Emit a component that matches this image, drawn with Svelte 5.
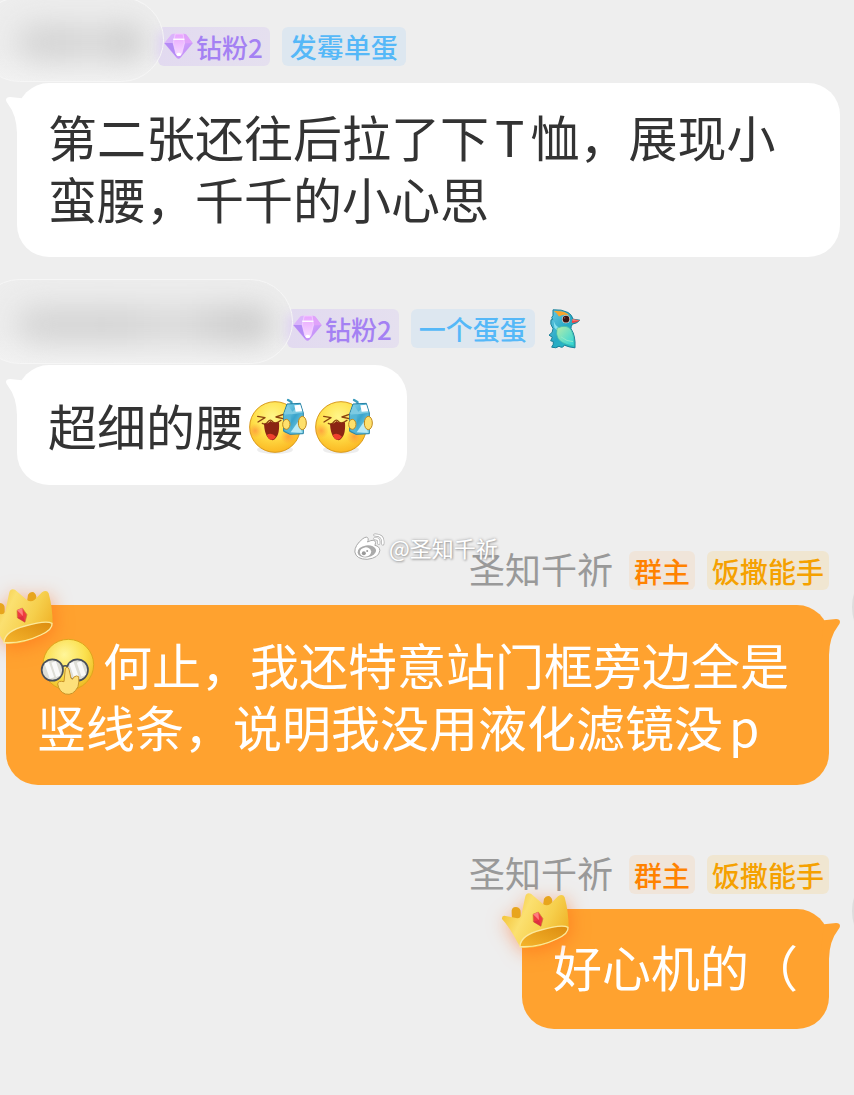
<script lang="ts">
	type Part = { kind: 'text' | 'latin' | 'laugh' | 'glasses'; text?: string };

	interface Message {
		own: boolean;
		name?: string;
		hiddenWidth?: number;
		fanLevel?: string;
		tags: { label: string; tone: string }[];
		bird?: boolean;
		parts: Part[];
	}

	const ownerTags = [
		{ label: '群主', tone: 'owner' },
		{ label: '饭撒能手', tone: 'gold' }
	];

	const messages: Message[] = [
		{
			own: false,
			hiddenWidth: 129,
			fanLevel: '钻粉2',
			tags: [{ label: '发霉单蛋', tone: 'blue' }],
			parts: [
				{ kind: 'text', text: '第二张还往后拉了下' },
				{ kind: 'latin', text: 'T' },
				{ kind: 'text', text: '恤，展现小蛮腰，千千的小心思' }
			]
		},
		{
			own: false,
			hiddenWidth: 258,
			fanLevel: '钻粉2',
			tags: [{ label: '一个蛋蛋', tone: 'blue' }],
			bird: true,
			parts: [{ kind: 'text', text: '超细的腰' }, { kind: 'laugh' }, { kind: 'laugh' }]
		},
		{
			own: true,
			name: '圣知千祈',
			tags: ownerTags,
			parts: [
				{ kind: 'glasses' },
				{ kind: 'text', text: '何止，我还特意站门框旁边全是竖线条，说明我没用液化滤镜没' },
				{ kind: 'latin', text: 'p' }
			]
		},
		{
			own: true,
			name: '圣知千祈',
			tags: ownerTags,
			parts: [{ kind: 'text', text: '好心机的（' }]
		}
	];
</script>

<!-- Gradients shared by the icons -->
<svg class="defs" width="0" height="0" aria-hidden="true">
	<defs>
		<radialGradient id="face" cx="45%" cy="30%" r="75%">
			<stop offset="0" stop-color="#fff68a" />
			<stop offset=".5" stop-color="#ffe04a" />
			<stop offset="1" stop-color="#fbb21c" />
		</radialGradient>
		<radialGradient id="face-pale" cx="42%" cy="30%" r="75%">
			<stop offset="0" stop-color="#fff69a" />
			<stop offset=".55" stop-color="#fbe04e" />
			<stop offset="1" stop-color="#edb820" />
		</radialGradient>
		<radialGradient id="blush">
			<stop offset="0" stop-color="#ff7a3c" stop-opacity=".55" />
			<stop offset="1" stop-color="#ff8a3c" stop-opacity="0" />
		</radialGradient>
		<linearGradient id="carton" x1="0" y1="0" x2="1" y2="1">
			<stop offset="0" stop-color="#8fdcf0" />
			<stop offset=".5" stop-color="#3aa4cb" />
			<stop offset="1" stop-color="#8fdcf0" />
		</linearGradient>
		<linearGradient id="crown" x1="0" y1=".2" x2="1" y2=".6">
			<stop offset="0" stop-color="#f2bd2c" />
			<stop offset=".35" stop-color="#fbe070" />
			<stop offset=".7" stop-color="#f6cf4c" />
			<stop offset="1" stop-color="#f0b42a" />
		</linearGradient>
		<linearGradient id="crown-inside" x1="0" y1="1" x2="1" y2="0">
			<stop offset="0" stop-color="#f5b52c" />
			<stop offset="1" stop-color="#dc8c10" />
		</linearGradient>
		<linearGradient id="gem" x1="0" y1="0" x2="1" y2="1">
			<stop offset="0" stop-color="#f3b4ff" />
			<stop offset=".5" stop-color="#d3a2fa" />
			<stop offset="1" stop-color="#b886f8" />
		</linearGradient>
		<linearGradient id="gem-front" x1="0" y1="0" x2="0" y2="1">
			<stop offset="0" stop-color="#e8a4ff" />
			<stop offset="1" stop-color="#f7dcff" />
		</linearGradient>
		<linearGradient id="bird-body" x1="0" y1="0" x2="1" y2="1">
			<stop offset="0" stop-color="#6cc9e6" />
			<stop offset=".5" stop-color="#28a9c4" />
			<stop offset="1" stop-color="#22c3c0" />
		</linearGradient>
		<linearGradient id="bird-wing" x1="0" y1="0" x2="1" y2="1">
			<stop offset="0" stop-color="#b4ecab" />
			<stop offset="1" stop-color="#2cd4da" />
		</linearGradient>
	</defs>
</svg>

{#snippet gem()}
	<svg class="gem" viewBox="26 60 88 88" aria-hidden="true">
		<path d="M48 68 Q51 65 56 65 H87 Q91 65 94 68 L113 94 L76 138 Q70 144 64 138 L27 94 Z" fill="url(#gem)" />
		<path d="M48 68 L27 94 H54 L60 66 Z" fill="#d9b4fb" />
		<path d="M94 68 L113 94 H88 L82 66 Z" fill="#e0a2fa" />
		<path d="M27 93 H55 L64 136 Z" fill="#b48bf5" />
		<path d="M60 66 H84 L88 94 L80 126 Q70 138 62 126 L54 94 Z" fill="url(#gem-front)" stroke="#f6dcff" stroke-width="2" />
		<path d="M54 82 H88" stroke="#fff" stroke-width="4" />
		<ellipse cx="71" cy="128" rx="7" ry="5" fill="#fff" />
	</svg>
{/snippet}

{#snippet bird()}
	<svg class="bird" viewBox="786 38 102 122" role="img" aria-label="bird">
		<path
			d="M804 43 Q830 41 849 51 Q861 58 864 71 L884 74 Q878 83 862 86 Q857 94 858 100 Q872 119 870 157 Q851 155 838 149 Q833 160 822 152 Q814 160 800 155 Q807 147 805 138 L797 136 L802 125 L792 119 Q805 112 804 99 Q794 86 798 73 L803 72 Q797 66 804 60 Z"
			fill="url(#bird-body)"
			stroke="#197f98"
			stroke-width="3"
			stroke-linejoin="round"
		/>
		<path d="M806 47 Q840 45 853 60 Q834 55 822 63 Q817 51 806 47Z" fill="#f9a52c" />
		<path d="M862 71 L884 74 Q874 84 860 82Z" fill="#ee4545" />
		<path d="M862 71 L884 74 L863 76Z" fill="#ff9084" />
		<path d="M806 76 Q812 98 834 100 Q815 110 808 96Z" fill="#87e2f0" />
		<path d="M816 98 Q848 84 860 106 Q869 124 867 151 Q817 145 815 115Z" fill="url(#bird-wing)" stroke="#3fb9a9" stroke-width="2" />
		<path d="M828 124 Q846 139 864 138" fill="none" stroke="#8deccc" stroke-width="3" />
		<circle cx="843" cy="71" r="12" fill="#f4d9cf" />
		<circle cx="843" cy="71" r="10" fill="#371414" />
		<circle cx="839" cy="67" r="2" fill="#b77" />
	</svg>
{/snippet}

{#snippet laugh()}
	<svg class="emoji" viewBox="21 33 180 180" role="img" aria-label="laughing">
		<ellipse cx="105" cy="194" rx="54" ry="13" fill="#000" opacity=".07" />
		<circle cx="105" cy="126" r="76" fill="url(#face)" stroke="#d99a1c" stroke-width="3" />
		<circle cx="46" cy="137" r="22" fill="url(#blush)" />
		<circle cx="145" cy="154" r="24" fill="url(#blush)" />
		<g fill="none" stroke="#8b4310" stroke-width="4" stroke-linecap="round" stroke-linejoin="round">
			<path d="M53 94 L75 98 L54 111" />
			<path d="M130 88 L108 96 L129 101" />
			<path d="M67 115 Q78 121 84 110 Q91 101 98 110 Q107 119 123 106" />
		</g>
		<path d="M72 117 Q84 117 91 108 Q99 116 117 112 Q120 158 98 166 Q75 163 72 117Z" fill="#8b2413" />
		<path d="M80 150 Q94 140 108 155 Q98 170 86 161Z" fill="#ef402d" />
		<path d="M158 73 L154 51 L144 45" fill="none" stroke="#3d9dbc" stroke-width="7" stroke-linecap="round" />
		<path d="M141 57 L181 55 L190 84 V146 L150 148 L131 139 V86 Z" fill="url(#carton)" stroke="#2581a4" stroke-width="3" stroke-linejoin="round" />
		<path d="M143 59 L157 80 L179 58 L188 83 L155 88 L132 86Z" fill="#7dcbe2" />
		<path d="M163 61 L181 59 L187 79 L167 80Z" fill="#fff" />
		<path d="M135 91 L152 90 V144 L134 137Z" fill="#55b6d5" />
		<path d="M152 142 L174 110 L186 143Z" fill="#b9eaf5" />
		<ellipse cx="139" cy="118" rx="11" ry="15" fill="#fee06c" stroke="#bf891e" stroke-width="3" />
		<ellipse cx="187" cy="114" rx="12" ry="20" fill="#fee06c" stroke="#bf891e" stroke-width="3" />
	</svg>
{/snippet}

{#snippet glasses()}
	<svg class="emoji" viewBox="123 168 180 180" role="img" aria-label="pushing up glasses">
		<circle cx="208" cy="257" r="76" fill="url(#face-pale)" stroke="#dda71c" stroke-width="3" />
		<g stroke="#4a505a" stroke-width="5">
			<circle cx="160" cy="273" r="32" fill="#deded6" />
			<circle cx="235" cy="273" r="32" fill="#deded6" />
			<path d="M190 264 Q198 257 207 263" fill="none" />
		</g>
		<g stroke="#fff" stroke-width="14" opacity=".85">
			<path d="M143 251 L159 297 M164 249 L178 292" />
			<path d="M217 251 L233 297 M240 249 L254 290" />
		</g>
		<path
			d="M199 269 Q206 260 210 271 L216 298 Q221 305 225 294 Q233 288 239 293 Q241 309 237 323 Q223 351 199 345 Q180 338 176 315 Q177 304 195 308 Z"
			fill="#fde07a"
			stroke="#c8942a"
			stroke-width="3"
			stroke-linejoin="round"
		/>
	</svg>
{/snippet}

{#snippet crown()}
	<svg class="crown" viewBox="30 120 210 174" aria-hidden="true">
		<path d="M66 205 L65 185 Q63 168 78 168 Q93 170 92 184 L92 210Z" fill="#e8a51d" />
		<path d="M157 178 L162 143 Q168 133 179 136 Q188 142 187 155 L190 178Z" fill="#e8a51d" />
		<path
			d="M36 204 Q35 191 47 195 L82 202 Q91 202 94 192 L106 136 Q110 123 123 128 L158 158 Q170 167 181 159 L204 136 Q218 126 224 139 Q236 184 236 229 Q232 251 201 265 Q145 294 96 290 Q88 287 84 277 Q58 227 36 204Z"
			fill="url(#crown)"
		/>
		<path d="M90 285 Q93 252 153 237 Q216 219 234 229 Q237 247 200 264 Q146 290 90 287Z" fill="url(#crown-inside)" stroke="#fce99c" stroke-width="4" />
		<path d="M129 190 L145 183 L159 203 L153 226 L130 212Z" fill="#ee3b41" stroke="#c98a2d" stroke-width="2" />
		<path d="M129 190 L145 183 L147 207Z" fill="#ff7d7d" />
		<path d="M147 207 L153 226 L130 212Z" fill="#dc2f40" />
	</svg>
{/snippet}

<main class="chat">
	{#each messages as message}
		<article class="message" class:own={message.own}>
			<header class="sender">
				{#if message.name}
					<span class="name">{message.name}</span>
				{:else}
					<span class="hidden-name" style="width: {message.hiddenWidth}px">
						<span class="smudge"></span>
					</span>
				{/if}
				{#if message.fanLevel}
					<span class="tag fan">{@render gem()}{message.fanLevel}</span>
				{/if}
				{#each message.tags as tag}
					<span class="tag {tag.tone}">{tag.label}</span>
				{/each}
				{#if message.bird}
					{@render bird()}
				{/if}
			</header>

			<div class="bubble">
				<svg class="tail" viewBox="18 288 60 111" aria-hidden="true">
					<path d="M18 300 Q18 291 30 291 L66 295 L78 399 L51 399 Q50 345 24 312 Q18 304 18 300Z" fill="currentColor" />
				</svg>
				{#if message.own}
					{@render crown()}
				{/if}
				<p>
					{#each message.parts as part}{#if part.kind === 'laugh'}{@render laugh()}{:else if part.kind === 'glasses'}{@render glasses()}{:else if part.kind === 'latin'}<span class="latin">{part.text}</span>{:else}{part.text}{/if}{/each}
				</p>
			</div>
		</article>
	{/each}

	<div class="watermark">
		<svg viewBox="42 26 98 84" aria-hidden="true">
			<path
				d="M47 83 Q46 63 71 43 Q84 34 87 43 Q88 48 85 53 Q107 42 109 54 Q109 60 107 63 Q122 66 122 79 Q119 101 84 105 Q51 105 47 83Z"
				fill="#fff"
				stroke="#aaa"
				stroke-width="3"
			/>
			<ellipse cx="83" cy="81" rx="28" ry="18" transform="rotate(-8 83 81)" fill="#aaa" />
			<ellipse cx="79" cy="83" rx="17" ry="14" transform="rotate(-8 79 83)" fill="#fff" />
			<circle cx="74" cy="87" r="6" fill="#999" />
			<circle cx="84" cy="80" r="3" fill="#999" />
			<g fill="none" stroke-linecap="round">
				<path d="M107 32 Q134 31 131 59 M107 43 Q121 42 119 57" stroke="#aaa" stroke-width="9" />
				<path d="M107 32 Q134 31 131 59 M107 43 Q121 42 119 57" stroke="#fff" stroke-width="5" />
			</g>
		</svg>
		@圣知千祈
	</div>
</main>

<style>
	:global(body) {
		background: #eee;
	}

	.defs {
		position: absolute;
	}

	.chat {
		position: relative;
		overflow: hidden;
		padding: 27px 0 66px;
		font-family: 'Noto Sans CJK SC', 'Noto Sans', sans-serif;
		color: #333;
	}

	.message {
		position: relative;
		display: flex;
		flex-direction: column;
		align-items: flex-start;
		gap: 17px;
		padding: 0 14px 0 17px;
	}

	.message + .message {
		margin-top: 52px;
	}

	.message.own {
		align-items: flex-end;
		gap: 15px;
		margin-top: 66px;
		padding: 0 25px 0 6px;
	}

	.own + .message.own {
		margin-top: 70px;
	}

	/* Edge of the sender's avatar */
	.own::after {
		content: '';
		position: absolute;
		top: 8px;
		right: -94px;
		width: 96px;
		height: 96px;
		border-radius: 50%;
		background: #ddd;
	}

	.sender {
		display: flex;
		align-items: center;
		gap: 12px;
		height: 39px;
	}

	.name {
		margin-right: 4px;
		padding-bottom: 4px;
		font-size: 36px;
		line-height: 39px;
		color: #999;
	}

	/* Names of other members are smudged out */
	.hidden-name {
		position: relative;
		z-index: 1;
		height: 39px;
	}

	.smudge {
		position: absolute;
		inset: -30px -18px -16px -40px;
		border: 1px solid #f6f6f6;
		border-radius: 44px;
		background: linear-gradient(#ededed 60%, #f2f2f2);
		overflow: hidden;
	}

	.smudge::before {
		content: '';
		position: absolute;
		inset: 26px 20px 20px 40px;
		border-radius: 16px;
		background: linear-gradient(90deg, #d6d6d6, #d4d4d4 40%, #dcdcdc 62%, #cdcdcd 85%);
		filter: blur(14px);
	}

	.smudge::after {
		content: '';
		position: absolute;
		top: 34px;
		right: -8px;
		width: 12px;
		height: 30px;
		background: #dccff2;
		filter: blur(6px);
	}

	.tag {
		display: flex;
		align-items: center;
		height: 39px;
		padding: 0 5px;
		border-radius: 6px;
		font-size: 28px;
		font-weight: 500;
		line-height: 36px;
	}

	.fan {
		gap: 3px;
		padding: 0 7px 0 6px;
		font-size: 26px;
		color: #a481f3;
		background: linear-gradient(90deg, #e2daf0, #e5e0ef);
	}

	.blue {
		padding: 0 8px;
		font-size: 27px;
		color: #55b8f8;
		background: #dde7f0;
	}

	.owner {
		color: #ff8200;
		background: #f0e5da;
	}

	.gold {
		color: #f5a100;
		background: #f0e6d1;
	}

	.gem {
		flex: none;
		width: 29px;
		height: 29px;
	}

	.bird {
		width: 34px;
		height: 41px;
	}

	.bubble {
		position: relative;
		display: flex;
		align-items: center;
		box-sizing: border-box;
		min-height: 120px;
		padding: 22px 31px 28px;
		border-radius: 32px;
		background: #fff;
	}

	.own .bubble {
		color: #fff;
		background: #ffa22f;
	}

	.bubble p {
		margin: 0;
		font-size: 49px;
		line-height: 62px;
	}

	.latin {
		margin: 0 6px;
	}

	.emoji {
		width: 60px;
		height: 60px;
		margin: 8px 3px 0;
		vertical-align: -10px;
	}

	.tail {
		position: absolute;
		top: 13px;
		left: -11px;
		width: 20px;
		height: 37px;
		color: #fff;
	}

	.own .tail {
		right: -11px;
		left: auto;
		color: #ffa22f;
		transform: scaleX(-1);
	}

	.crown {
		position: absolute;
		top: -18px;
		left: -22px;
		width: 70px;
		height: 58px;
		filter: drop-shadow(2px 4px 9px rgba(255, 100, 20, 0.5));
	}

	.watermark {
		position: absolute;
		top: 531px;
		left: 353px;
		display: flex;
		align-items: center;
		gap: 3px;
		font-size: 22px;
		line-height: 32px;
		color: #fff;
		text-shadow: 0 0 3px #999, 1px 1px 2px #aaa;
	}

	.watermark svg {
		width: 33px;
		height: 28px;
	}
</style>
